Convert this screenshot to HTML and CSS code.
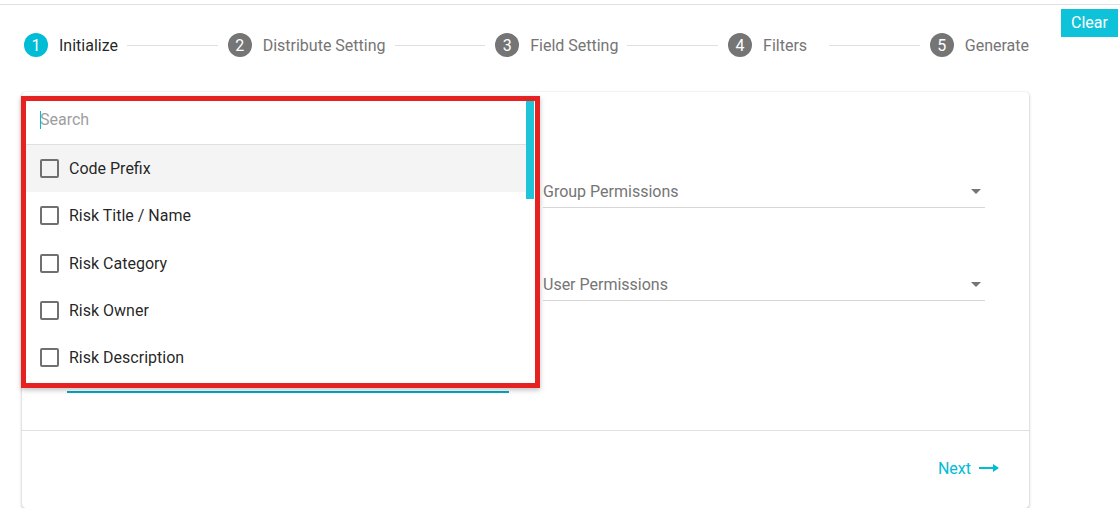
FILE: index.html
```html
<!DOCTYPE html>
<html lang="en">
<head>
    <meta charset="UTF-8">
    <meta name="viewport" content="width=device-width, initial-scale=1.0">
    <title>Report Wizard</title>
    <link rel="stylesheet" href="styles.css">
</head>
<body>
    <div class="top-bar"></div>

    <div class="page">
        <div class="main">
            <!-- wizard steps -->
            <div class="stepper">
                <div class="step active"><span class="step-num">1</span><span class="step-label">Initialize</span></div>
                <div class="step-line"></div>
                <div class="step"><span class="step-num">2</span><span class="step-label">Distribute Setting</span></div>
                <div class="step-line"></div>
                <div class="step"><span class="step-num">3</span><span class="step-label">Field Setting</span></div>
                <div class="step-line"></div>
                <div class="step"><span class="step-num">4</span><span class="step-label">Filters</span></div>
                <div class="step-line wide"></div>
                <div class="step"><span class="step-num">5</span><span class="step-label">Generate</span></div>
            </div>

            <div class="card">
                <div class="card-body">
                    <div class="col">
                        <div class="field multi focused"></div>
                    </div>
                    <div class="col">
                        <div class="field select">
                            <span>Group Permissions</span>
                            <span class="caret"></span>
                        </div>
                        <div class="field select second">
                            <span>User Permissions</span>
                            <span class="caret"></span>
                        </div>
                    </div>
                </div>
                <div class="card-footer">
                    <a href="#" class="next-link">Next
                        <svg width="20" height="10" viewBox="0 0 20 10">
                            <line x1="0" y1="5" x2="15" y2="5" stroke="#00bcd4" stroke-width="2"/>
                            <polygon points="14,1 20,5 14,9" fill="#00bcd4"/>
                        </svg>
                    </a>
                </div>

                <!-- open dropdown of the fields picker -->
                <div class="dropdown">
                    <div class="dropdown-inner">
                        <div class="search-row">
                            <span class="text-caret"></span>
                            <input type="text" class="search-input" placeholder="Search">
                        </div>
                        <div class="option hover"><span class="checkbox"></span>Code Prefix</div>
                        <div class="option"><span class="checkbox"></span>Risk Title / Name</div>
                        <div class="option"><span class="checkbox"></span>Risk Category</div>
                        <div class="option"><span class="checkbox"></span>Risk Owner</div>
                        <div class="option"><span class="checkbox"></span>Risk Description</div>
                    </div>
                    <div class="scroll-thumb"></div>
                </div>
            </div>
        </div>

        <button class="clear-btn">Clear</button>
    </div>
</body>
</html>
```

FILE: styles.css
```css
body {
    margin: 0;
    font-family: Roboto, "Liberation Sans", sans-serif;
    font-size: 16px;
    color: rgba(0, 0, 0, 0.87);
    background: #fff;
}

.top-bar {
    height: 4px;
    border-bottom: 1px solid #e0e0e0;
}

.page {
    display: flex;
    align-items: flex-start;
    padding-left: 22px;
}

.main {
    width: 1007px;
}

/* Stepper */
.stepper {
    display: flex;
    align-items: center;
    padding: 28px 0 35px 2px;
}
.step {
    display: flex;
    align-items: center;
    gap: 11px;
    color: #757575;
}
.step.active {
    color: rgba(0, 0, 0, 0.87);
}
.step-num {
    width: 24px;
    height: 24px;
    border-radius: 50%;
    background: #757575;
    color: #fff;
    font-size: 16px;
    display: flex;
    align-items: center;
    justify-content: center;
}
.step.active .step-num {
    background: #00bcd4;
}
.step-line {
    flex: 1;
    height: 1px;
    background: #e0e0e0;
    margin: 0 10px 0 9px;
}
.step-line.wide {
    margin-left: 22px;
}

/* Clear button */
.clear-btn {
    margin: 4px 0 0 32px;
    height: 28px;
    padding: 0 10px 2px;
    border: none;
    background: #0ec3d9;
    color: #fff;
    font-family: inherit;
    font-size: 16px;
    cursor: pointer;
}

/* Card */
.card {
    position: relative;
    background: #fff;
    border-radius: 4px;
    box-shadow: 0 1px 3px rgba(0, 0, 0, 0.3), 0 0 1px rgba(0, 0, 0, 0.08);
}
.card-body {
    height: 338px;
    box-sizing: border-box;
    padding: 83px 44px 0 45px;
    display: grid;
    grid-template-columns: 442px 442px;
    gap: 34px;
}
.field {
    height: 32px;
    border-bottom: 1px solid #d6d6d6;
}
.field.multi {
    height: 216px;
}
.field.focused {
    border-bottom: 2px solid #00acc1;
}
.field.select {
    display: flex;
    align-items: center;
    justify-content: space-between;
    color: #757575;
    padding-right: 4px;
}
.field.second {
    margin-top: 60px;
}
.caret {
    width: 0;
    height: 0;
    border-left: 5px solid transparent;
    border-right: 5px solid transparent;
    border-top: 5px solid #757575;
}

.card-footer {
    border-top: 1px solid #e0e0e0;
    height: 77px;
    display: flex;
    align-items: center;
    justify-content: flex-end;
    padding-right: 30px;
}
.next-link {
    display: flex;
    align-items: center;
    gap: 8px;
    color: #00bcd4;
    text-decoration: none;
    margin: -3px 0 0 0;
}

/* Dropdown */
.dropdown {
    position: absolute;
    left: -1px;
    top: 4px;
    width: 519px;
    height: 292px;
    box-sizing: border-box;
    border: 5px solid #e52122;
    background: #fff;
    box-shadow: 0 2px 5px rgba(0, 0, 0, 0.25);
}
.dropdown-inner {
    height: 100%;
    overflow: hidden;
    margin-right: 9px;
}
.scroll-thumb {
    position: absolute;
    top: 0;
    right: 1px;
    width: 8px;
    height: 98px;
    background: #1fc4d9;
}
.search-row {
    position: relative;
    height: 44px;
    box-sizing: border-box;
    padding: 0 0 6px 14px;
    border-bottom: 1px solid #e0e0e0;
    display: flex;
    align-items: center;
}
.search-input {
    border: none;
    outline: none;
    padding: 0;
    font-family: inherit;
    font-size: 16px;
    width: 100%;
}
.search-input::placeholder {
    color: #9e9e9e;
}
.text-caret {
    position: absolute;
    left: 14px;
    top: 10px;
    width: 1px;
    height: 18px;
    background: #00bcd4;
}
.option {
    height: 47.25px;
    display: flex;
    align-items: center;
    gap: 10px;
    padding-left: 14px;
}
.option.hover {
    background: #f4f4f4;
}
.checkbox {
    width: 15px;
    height: 15px;
    border: 2px solid #707070;
    border-radius: 2px;
}
```
